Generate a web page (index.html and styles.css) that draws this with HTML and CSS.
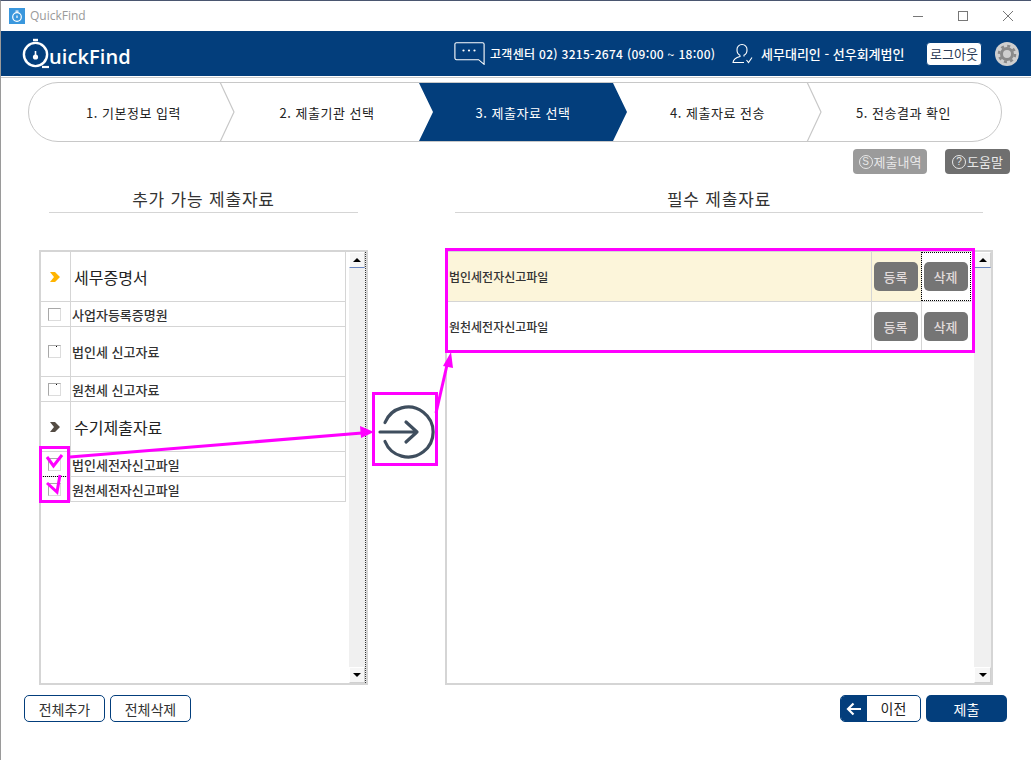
FILE: index.html
```html
<!DOCTYPE html>
<html lang="ko">
<head>
<meta charset="utf-8">
<title>QuickFind</title>
<link rel="stylesheet" href="styles.css">
</head>
<body>
<div class="window">
  <div class="titlebar">
    <span class="app-icon">
      <svg width="16" height="16" viewBox="0 0 16 16"><circle cx="8" cy="9" r="4.300" fill="none" stroke="#fff" stroke-width="1.200"/><path d="M6.500 3.200h3M8 7.500v2.500" stroke="#fff" stroke-width="1.200" fill="none"/></svg>
    </span>
    <span class="app-name">QuickFind</span>
    <div class="win-controls">
      <svg width="10" height="10" viewBox="0 0 10 10"><path d="M0 5.500h10" stroke="#777" stroke-width="1"/></svg>
      <svg width="10" height="10" viewBox="0 0 10 10"><rect x=".5" y=".5" width="9" height="9" fill="none" stroke="#777"/></svg>
      <svg width="10" height="10" viewBox="0 0 10 10"><path d="M0 0l10 10M10 0L0 10" stroke="#777" stroke-width="1"/></svg>
    </div>
  </div>

  <header class="header">
    <div class="logo">
      <svg width="30" height="32" viewBox="0 0 30 32"><path d="M12 2h5" stroke="#fff" stroke-width="2.400" fill="none"/><circle cx="14.500" cy="16.500" r="11.600" fill="none" stroke="#fff" stroke-width="2.400"/><path d="M14.500 13v5" stroke="#fff" stroke-width="1.600"/><circle cx="14.500" cy="19" r="2.600" fill="#fff"/><path d="M21 29h7" stroke="#fff" stroke-width="2.200"/></svg>
      <span class="logo-text">uickFind</span>
    </div>
    <div class="header-info">
      <svg class="chat-icon" width="31" height="23" viewBox="0 0 31 23"><path d="M2.500.7h26a1.600 1.600 0 0 1 1.600 1.600v20l-5.500-4.600H2.500A1.600 1.600 0 0 1 .9 16.100V2.300A1.600 1.600 0 0 1 2.500.7z" fill="none" stroke="#fff" stroke-width="1.100"/><circle cx="9.500" cy="8.500" r="1.100" fill="#fff"/><circle cx="15" cy="8.500" r="1.100" fill="#fff"/><circle cx="20.500" cy="8.500" r="1.100" fill="#fff"/></svg>
      <span class="center-text">고객센터 02) 3215-2674 (09:00 ~ 18:00)</span>
      <svg class="user-icon" width="21" height="22" viewBox="0 0 21 22"><path d="M10 1.500a5 5 0 0 1 5 5.500c0 2.500-1.500 4.500-3 5.200v1.300M8 12.200c-1.500-.7-3-2.700-3-5.200a5 5 0 0 1 5-5.500M8 12.200v1.300c-3 .8-6.500 2-7 6h11" fill="none" stroke="#fff" stroke-width="1.100"/><path d="M14.500 17l2 2.500 3.500-5" fill="none" stroke="#fff" stroke-width="1.100"/></svg>
      <span class="agent-text">세무대리인 - 선우회계법인</span>
      <button class="logout">로그아웃</button>
      <span class="gear">
        <svg width="24" height="24" viewBox="0 0 24 24"><circle cx="12" cy="12" r="12" fill="#cfcfcf"/><circle cx="12" cy="12" r="5.500" fill="none" stroke="#8a8a8a" stroke-width="3"/><circle cx="12" cy="12" r="8" fill="none" stroke="#8a8a8a" stroke-width="2.600" stroke-dasharray="3 3.280"/></svg>
      </span>
    </div>
  </header>

  <div class="header-rule"></div>

  <nav class="stepper">
    <div class="step first">1. 기본정보 입력<svg class="chev" width="16" height="60" viewBox="0 0 16 60"><path d="M1 0l14 30L1 60" fill="none" stroke="#c8c8c8" stroke-width="1.200"/></svg></div>
    <div class="step second">2. 제출기관 선택</div>
    <div class="step active">3. 제출자료 선택</div>
    <div class="step fourth">4. 제출자료 전송<svg class="chev" width="16" height="60" viewBox="0 0 16 60"><path d="M1 0l14 30L1 60" fill="none" stroke="#c8c8c8" stroke-width="1.200"/></svg></div>
    <div class="step last">5. 전송결과 확인</div>
  </nav>

  <div class="actions">
    <button class="pill light"><span class="circ">S</span>제출내역</button>
    <button class="pill dark"><span class="circ">?</span>도움말</button>
  </div>

  <main class="columns">
    <section class="col">
      <h2 class="col-title">추가 가능 제출자료</h2>
      <div class="box">
        <div class="list">
          <div class="row tall"><span class="cell-icon"><svg width="12" height="12" viewBox="0 0 12 12"><path d="M1 1h5l5 5-5 5H1l4-5z" fill="#ffb400"/></svg></span><span class="group-label">세무증명서</span></div>
          <div class="row"><span class="cell-icon"><i class="check"></i></span><span class="item-label">사업자등록증명원</span></div>
          <div class="row tall"><span class="cell-icon"><i class="check dot"></i></span><span class="item-label">법인세 신고자료</span></div>
          <div class="row"><span class="cell-icon"><i class="check dot"></i></span><span class="item-label">원천세 신고자료</span></div>
          <div class="row tall"><span class="cell-icon"><svg width="12" height="12" viewBox="0 0 12 12"><path d="M1 1h5l5 5-5 5H1l4-5z" fill="#544c44"/></svg></span><span class="group-label">수기제출자료</span></div>
          <div class="row"><span class="cell-icon"><i class="check"></i></span><span class="item-label">법인세전자신고파일</span></div>
          <div class="row focus-row"><span class="cell-icon"><i class="check"></i></span><span class="item-label">원천세전자신고파일</span></div>
        </div>
        <div class="scrollbar dotted">
          <span class="sb-btn up"></span><span class="sb-track"></span><span class="sb-btn down"></span>
        </div>
      </div>
    </section>

    <div class="arrow-col">
      <svg width="60" height="60" viewBox="0 0 60 60"><path d="M7 20.500A25 25 0 1 1 7 39.500" fill="none" stroke="#3f4e5e" stroke-width="3.200" stroke-linecap="round"/><path d="M2 30h37M28 20l11 10-11 10" fill="none" stroke="#3f4e5e" stroke-width="3.200" stroke-linecap="round" stroke-linejoin="round"/></svg>
    </div>

    <section class="col">
      <h2 class="col-title">필수 제출자료</h2>
      <div class="box">
        <div class="table">
          <div class="trow hl">
            <span class="name">법인세전자신고파일</span>
            <span class="act"><button class="mini">등록</button></span>
            <span class="act focus"><button class="mini">삭제</button></span>
          </div>
          <div class="trow">
            <span class="name">원천세전자신고파일</span>
            <span class="act"><button class="mini">등록</button></span>
            <span class="act"><button class="mini">삭제</button></span>
          </div>
        </div>
        <div class="scrollbar">
          <span class="sb-btn up"></span><span class="sb-track"></span><span class="sb-btn down"></span>
        </div>
      </div>
    </section>
  </main>

  <footer class="footer">
    <div class="foot-group">
      <button class="outline">전체추가</button>
      <button class="outline">전체삭제</button>
    </div>
    <div class="foot-group">
      <button class="prev"><span class="prev-icon"><svg width="16" height="14" viewBox="0 0 16 14"><path d="M15 7H2M7.500 1.500L2 7l5.500 5.500" fill="none" stroke="#fff" stroke-width="2.200"/></svg></span><span class="prev-label">이전</span></button>
      <button class="submit">제출</button>
    </div>
  </footer>

  <svg class="markup" width="1031" height="760" viewBox="0 0 1031 760">
    <g fill="none" stroke="#ff00ff" stroke-width="3">
      <rect x="40.500" y="447.500" width="28" height="54"/>
      <rect x="373.500" y="393.500" width="63" height="71"/>
      <rect x="446.500" y="249.500" width="527" height="102"/>
      <path d="M70 457L362 433"/>
      <path d="M436 413L447 365"/>
      <path d="M47 457l6.500 9L62 455M47 483l10 9 3-17" stroke-width="3"/>
    </g>
    <path d="M374 432l-14-6 1 12zM451 352l-8 14 10 2z" fill="#ff00ff"/>
  </svg>
</div>
</body>
</html>
```
FILE: styles.css
```css
* { box-sizing: border-box; }
html, body { margin: 0; padding: 0; background: #fff; }
body { width: 1031px; height: 760px; overflow: hidden; }
button { font-family: inherit; cursor: pointer; padding: 0; }

.window {
  position: relative;
  width: 1031px;
  height: 760px;
  overflow: hidden;
  background: #fff;
  border-top: 1px solid #4a5670;
  border-left: 1px solid #9a9a9a;
  font-family: "Noto Sans CJK KR", "Noto Sans", sans-serif;
  color: #222;
}

.titlebar {
  display: flex;
  align-items: center;
  height: 30px;
  padding-left: 8px;
}
.app-icon {
  width: 16px;
  height: 16px;
  background: #3a97dd;
  display: flex;
}
.app-name {
  margin: -2px 0 0 5px;
  font-family: "Open Sans", sans-serif;
  font-size: 12px;
  color: #9a9a9a;
}
.win-controls {
  margin-left: auto;
  display: flex;
  gap: 35px;
  padding-right: 18px;
}

.header {
  height: 45px;
  background: #033e7c;
  display: flex;
  align-items: center;
  justify-content: space-between;
  color: #fff;
}
.logo {
  display: flex;
  align-items: flex-end;
  margin: 0 0 0 20px;
}
.logo-text {
  font-family: "Open Sans", sans-serif;
  font-weight: 600;
  font-size: 20px;
  line-height: 27px;
  margin-left: -2px;
  letter-spacing: .1px;
}
.header-info {
  display: flex;
  align-items: center;
  padding-right: 12px;
  font-size: 12px;
  font-weight: 500;
}
.chat-icon { margin-right: 5px; }
.center-text { width: 226px; white-space: nowrap; letter-spacing: .3px; }
.user-icon { margin: 0 8px 0 16px; }
.agent-text { white-space: nowrap; width: 145px; font-size: 13px; }
.logout {
  width: 56px;
  height: 24px;
  margin-left: 20px;
  background: #fff;
  color: #2b3a55;
  border: 1px solid #033e7c;
  border-radius: 4px;
  font-size: 13px;
}
.gear { display: flex; margin-left: 13px; }

.header-rule {
  height: 1px;
  margin-top: 1px;
  background: #c9c9c9;
}

.stepper {
  display: flex;
  width: 974px;
  height: 60px;
  margin: 4px 0 0 27px;
  border: 1px solid #c8c8c8;
  border-radius: 30px;
  overflow: hidden;
  font-size: 13px;
  letter-spacing: .5px;
}
.step {
  position: relative;
  display: flex;
  align-items: center;
  justify-content: center;
  color: #222;
  white-space: nowrap;
}
.step.first { flex: 0 0 206px; margin-right: -14px; padding-left: 3px; }
.step.second { flex: 0 0 212px; margin-right: -14px; }
.step.active {
  flex: 0 0 208px;
  margin-right: -14px;
  background: #033e7c;
  color: #fff;
  clip-path: polygon(0 0, 194px 0, 208px 50%, 194px 100%, 0 100%, 14px 50%);
  z-index: 1;
}
.step.fourth { flex: 0 0 209px; margin-right: -14px; }
.step.last { flex: 1 1 0; padding-right: 2px; }
.chev {
  position: absolute;
  right: 0;
  top: -1px;
}

.actions {
  display: flex;
  justify-content: flex-end;
  gap: 18px;
  height: 25px;
  margin-top: 7px;
  padding-right: 21px;
}
.pill {
  display: flex;
  align-items: center;
  justify-content: center;
  height: 25px;
  border: none;
  border-radius: 4px;
  color: #e8e8e8;
  font-size: 13px;
}
.pill.light { width: 74px; background: #9b9b9b; }
.pill.dark { width: 65px; background: #6f6f6f; }
.circ {
  width: 14px;
  height: 14px;
  border: 1px solid #e8e8e8;
  border-radius: 50%;
  font-size: 10px;
  line-height: 12px;
  text-align: center;
  font-family: "Liberation Sans", sans-serif;
  margin-right: 1px;
}

.columns {
  display: grid;
  grid-template-columns: 329px 77px 548px;
  margin: 15px 0 0 38px;
}
.col-title {
  margin: 0 10px;
  height: 24px;
  border-bottom: 1px solid #d5d5d5;
  font-size: 17px;
  font-weight: 400;
  line-height: 20px;
  letter-spacing: .8px;
  text-align: center;
  color: #333;
}
.box {
  display: flex;
  justify-content: space-between;
  height: 435px;
  margin-top: 37px;
  border: 2px solid #d5d5d5;
  background: #fff;
}
.list { width: 305px; }
.row {
  display: flex;
  height: 25px;
  border-bottom: 1px solid #d5d5d5;
  border-right: 1px solid #d5d5d5;
}
.row.tall { height: 50px; }
.row.focus-row { position: relative; }
.row.focus-row::before {
  content: "";
  position: absolute;
  left: 2px;
  right: 275px;
  top: -1px;
  border-top: 1px dotted #000;
}
.cell-icon {
  flex: 0 0 30px;
  display: flex;
  align-items: center;
  justify-content: center;
  padding-right: 2px;
  border-right: 1px solid #d5d5d5;
}
.group-label {
  padding-left: 3px;
  align-self: center;
  font-size: 16px;
  color: #222;
}
.item-label {
  padding-left: 1px;
  align-self: center;
  font-size: 13px;
  font-weight: 500;
  color: #333;
}
.check {
  position: relative;
  width: 13px;
  height: 13px;
  background: #fff;
  border: 1px solid #dcdcdc;
  border-top-color: #a8a8a8;
  border-left-color: #a8a8a8;
}
.check.dot::after {
  content: "";
  position: absolute;
  right: 3px;
  top: 0;
  width: 1px;
  height: 1px;
  background: #000;
}

.scrollbar {
  width: 17px;
  display: flex;
  flex-direction: column;
  background: #f0f0f0;
}
.scrollbar.dotted { border-right: 1px dotted #333; }
.sb-track { flex: 1; }
.sb-btn {
  display: flex;
  align-items: center;
  justify-content: center;
  height: 16px;
  background: #f6f6f6;
  border: 1px solid #d0d0d0;
  border-top-color: #fff;
  border-left-color: #fff;
}
.sb-btn.up::after {
  content: "";
  border: 4px solid transparent;
  border-top: 0;
  border-bottom: 4px solid #000;
}
.sb-btn.up { border-bottom: 1px solid #6a86c0; }
.sb-btn.down::after {
  content: "";
  border: 4px solid transparent;
  border-bottom: 0;
  border-top: 4px solid #000;
}

.arrow-col {
  display: flex;
  padding: 213px 0 0 10px;
}

.table { flex: 0 0 524px; }
.trow {
  display: flex;
  height: 50px;
  border-bottom: 1px solid #d5d5d5;
}
.trow.hl { background: #fcf5da; }
.name {
  flex: 1;
  align-self: center;
  padding-left: 2px;
  font-size: 12px;
  font-weight: 500;
  color: #333;
}
.act {
  flex: 0 0 50px;
  display: flex;
  align-items: center;
  justify-content: center;
  padding-right: 2px;
  border-left: 1px solid #d5d5d5;
}
.act.focus {
  background: #fff;
  outline: 1px dotted #000;
  outline-offset: -1px;
}
.mini {
  width: 44px;
  height: 29px;
  border: none;
  border-radius: 5px;
  background: #757575;
  color: #e2dcdc;
  font-size: 13px;
  font-weight: 500;
}

.footer {
  display: flex;
  justify-content: space-between;
  margin-top: 10px;
  padding: 0 24px 0 23px;
}
.foot-group { display: flex; gap: 5px; }
.outline {
  width: 81px;
  height: 27px;
  background: #fff;
  border: 1px solid #033e7c;
  border-radius: 5px;
  font-size: 14px;
  color: #333;
}
.prev {
  display: flex;
  width: 81px;
  height: 27px;
  background: #fff;
  border: 1px solid #033e7c;
  border-radius: 5px;
  overflow: hidden;
  font-size: 14px;
  color: #222;
}
.prev-icon {
  flex: 0 0 26px;
  display: flex;
  align-items: center;
  justify-content: center;
  background: #033e7c;
}
.prev-label { flex: 1; line-height: 24px; text-align: center; }
.submit {
  width: 81px;
  height: 27px;
  background: #033e7c;
  border: none;
  border-radius: 5px;
  font-size: 14px;
  color: #fff;
}

.markup {
  position: absolute;
  left: -1px;
  top: -1px;
  pointer-events: none;
}
```
